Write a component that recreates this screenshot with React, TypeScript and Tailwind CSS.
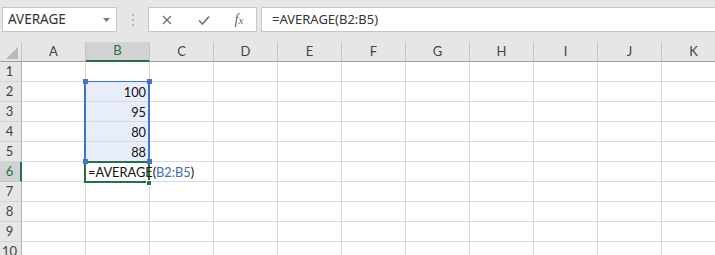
const cols = ['A', 'B', 'C', 'D', 'E', 'F', 'G', 'H', 'I', 'J', 'K'];
const rows = [1, 2, 3, 4, 5, 6, 7, 8, 9, 10];

// B column values
const values: Record<number, string> = { 2: '100', 3: '95', 4: '80', 5: '88' };

const FormulaBar = () => {
  return (
    <div className="flex h-[42px] items-start pt-[7px] font-['Noto_Sans',sans-serif] text-[13px] text-[#333]">
      {/* Name box */}
      <div className="ml-[2px] flex h-[25px] w-[115px] shrink-0 items-center justify-between border border-[#c6c6c6] bg-white pl-[5px] pr-[6px]">
        <span className="text-[13.5px]">AVERAGE</span>
        <svg width="7" height="4" viewBox="0 0 7 4">
          <path d="M0 0h7L3.5 4z" fill="#7a7a7a" />
        </svg>
      </div>

      {/* Grip */}
      <div className="flex h-[25px] w-[31px] shrink-0 flex-col items-center justify-center gap-[3px]">
        <div className="h-[2px] w-[2px] bg-[#b4b4b4]"></div>
        <div className="h-[2px] w-[2px] bg-[#b4b4b4]"></div>
        <div className="h-[2px] w-[2px] bg-[#b4b4b4]"></div>
      </div>

      {/* Cancel / enter / insert function */}
      <div className="flex h-[25px] w-[109px] shrink-0 items-center border border-[#c6c6c6] bg-white">
        <div className="flex w-[36px] justify-center">
          <svg width="10" height="10" viewBox="0 0 10 10">
            <path d="M1 1L9 9M9 1L1 9" stroke="#6e6e6e" strokeWidth="1.3" fill="none" />
          </svg>
        </div>
        <div className="flex w-[37px] justify-center">
          <svg width="12" height="10" viewBox="0 0 12 10">
            <path d="M1 5.5L4.5 9L11 1.5" stroke="#6e6e6e" strokeWidth="1.6" fill="none" />
          </svg>
        </div>
        <div className="flex w-[34px] justify-center font-['Liberation_Serif',serif] text-[14px] italic text-[#666]">
          <span>
            f<span className="text-[11px]">x</span>
          </span>
        </div>
      </div>

      {/* Formula input */}
      <div className="ml-[4px] flex h-[25px] w-[470px] shrink-0 items-center border border-[#c6c6c6] bg-white pl-[10px]">
        =AVERAGE(B2:B5)
      </div>
    </div>
  );
};

const Sheet = () => {
  return (
    <div className="font-['Lato',sans-serif] text-[13px]">
      {/* Column headers */}
      <div className="flex h-[20px]">
        <div className="flex w-[22px] shrink-0 items-end justify-end border-b border-r border-b-[#9e9e9e] border-r-[#c4c4c4] bg-[#e6e6e6] pb-[2px] pr-[3px]">
          <svg width="12" height="12" viewBox="0 0 12 12">
            <path d="M12 0V12H0z" fill="#b8b8b8" />
          </svg>
        </div>
        {cols.map((c) => (
          <div
            key={c}
            className={
              c === 'B'
                ? 'flex w-[64px] shrink-0 items-center justify-center border-b-2 border-r border-b-[#217346] border-r-[#c4c4c4] bg-[#d2d2d2] text-[#217346]'
                : 'flex w-[64px] shrink-0 items-center justify-center border-b border-r border-b-[#9e9e9e] border-r-[#c4c4c4] bg-[#e6e6e6] text-[#444]'
            }
          >
            {c}
          </div>
        ))}
      </div>

      {/* Rows */}
      {rows.map((r) => (
        <div key={r} className="flex h-[20px]">
          <div
            className={
              r === 6
                ? 'flex w-[22px] shrink-0 items-center justify-center border-b border-r-2 border-b-[#c4c4c4] border-r-[#217346] bg-[#d2d2d2] pr-[1px] text-[#217346]'
                : 'flex w-[22px] shrink-0 items-center justify-center border-b border-r border-b-[#d4d4d4] border-r-[#b4b4b4] bg-[#e6e6e6] pr-[2px] text-[#444]'
            }
          >
            {r}
          </div>
          {cols.map((c) => {
            const inRange = c === 'B' && r >= 2 && r <= 5;
            return (
              <div
                key={c}
                className={`flex w-[64px] shrink-0 items-end border-b border-r border-[#d9d9d9] text-[12.8px] leading-[17px] text-[#111] ${
                  inRange ? 'justify-end bg-[#e7eefa] pr-[3px]' : 'bg-white'
                }`}
              >
                {inRange && values[r]}
                {c === 'B' && r === 6 && (
                  <span className="relative z-10 whitespace-nowrap pl-[2px]">
                    =AVERAGE(<span className="text-[#3d6db5]">B2:B5</span>)
                  </span>
                )}
              </div>
            );
          })}
        </div>
      ))}
    </div>
  );
};

export default function App() {
  return (
    <div className="relative h-[255px] w-[715px] overflow-hidden bg-[#e6e6e6]">
      <FormulaBar />
      <Sheet />

      {/* Reference range B2:B5 */}
      <div className="pointer-events-none absolute left-[84px] top-[81px] h-[81px] w-[66px] border-x-2 border-y border-[#4472c4]"></div>
      {/* Active cell B6 */}
      <div className="pointer-events-none absolute left-[84px] top-[161px] h-[22px] w-[66px] border-2 border-[#217346]"></div>
      <div className="absolute left-[146px] top-[180px] h-[6px] w-[6px] border border-white bg-[#217346]"></div>

      {/* Range handles */}
      <div className="absolute left-[83px] top-[79px] h-[5px] w-[5px] bg-[#4472c4]"></div>
      <div className="absolute left-[147px] top-[79px] h-[5px] w-[5px] bg-[#4472c4]"></div>
      <div className="absolute left-[83px] top-[159px] h-[5px] w-[5px] bg-[#4472c4]"></div>
      <div className="absolute left-[147px] top-[159px] h-[5px] w-[5px] bg-[#4472c4]"></div>
    </div>
  );
}
